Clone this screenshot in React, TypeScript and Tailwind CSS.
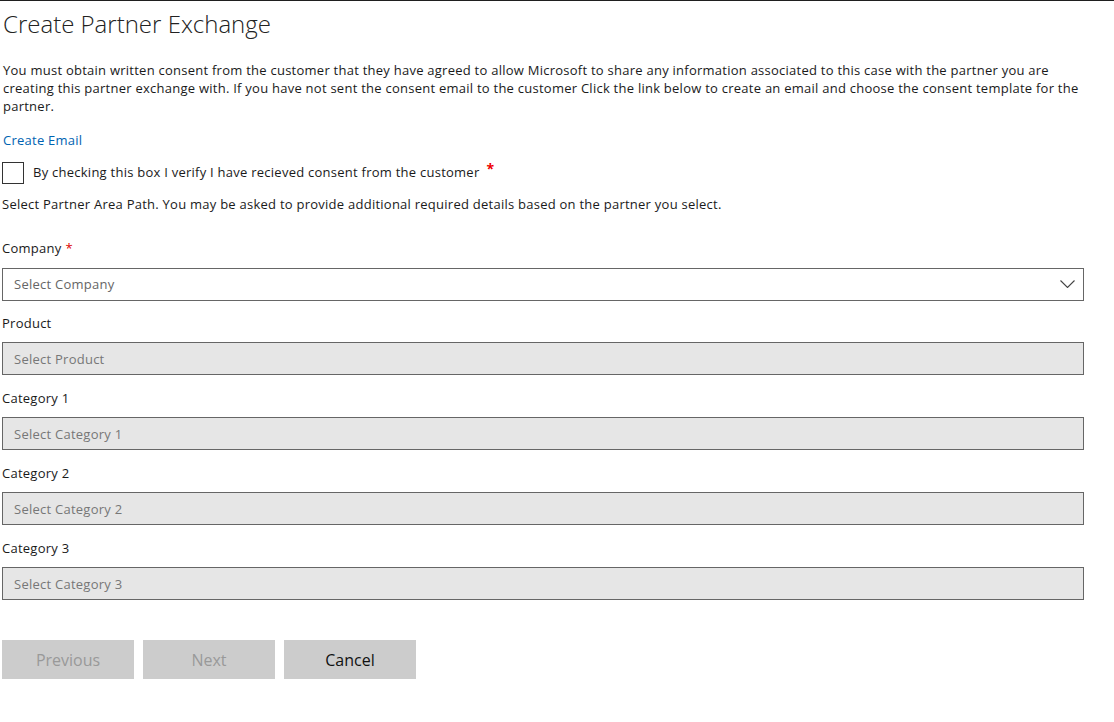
const fields = [
  { label: "Product", placeholder: "Select Product", first: true },
  { label: "Category 1", placeholder: "Select Category 1" },
  { label: "Category 2", placeholder: "Select Category 2" },
  { label: "Category 3", placeholder: "Select Category 3" },
];

export default function App() {
  return (
    <div
      className="min-h-[722px] w-[1114px] border-t border-[#1f1f1f] bg-white text-[13px] leading-[18px] tracking-[0.25px] text-[#1a1a1a]"
      style={{ fontFamily: '"Open Sans", "Noto Sans", sans-serif' }}
    >
      <div className="w-[1084px] pl-[2px]">
        <h1 className="mt-[7px] pl-[1px] text-[24px] leading-[32px] font-light tracking-normal text-[#222]">
          Create Partner Exchange
        </h1>

        <p className="mt-[21px] pl-[1px]">
          You must obtain written consent from the customer that they have agreed to allow Microsoft to share any
          information associated to this case with the partner you are
          <br />
          creating this partner exchange with. If you have not sent the consent email to the customer Click the link
          below to create an email and choose the consent template for the
          <br />
          partner.
        </p>

        <a href="#" className="mt-[16px] block pl-[1px] text-[#0063b1]">
          Create Email
        </a>

        <label className="mt-[13px] flex items-center">
          <span className="h-[22px] w-[22px] shrink-0 border border-[#333] bg-white" />
          <span className="ml-[9px] -mt-[2px]">
            By checking this box I verify I have recieved consent from the customer
          </span>
          <span className="ml-[7px] -mt-[8px] text-[14px] font-bold text-[#e00]">*</span>
        </label>

        <p className="mt-[11px]">
          Select Partner Area Path. You may be asked to provide additional required details based on the partner you
          select.
        </p>

        <div className="mt-[26px]">
          <div className="flex h-[18px] items-center">
            Company <span className="ml-[4px] text-[#d00]">*</span>
          </div>
          <div className="mt-[11px] flex h-[33px] items-center justify-between border border-[#666] bg-white pl-[11px] pr-[8px] text-[#666]">
            <span className="-mt-[1px]">Select Company</span>
            <svg width="15" height="8" viewBox="0 0 15 8" fill="none" stroke="#444" strokeWidth="1.1" className="-mt-[1px]">
              <path d="M0.5 0.5 L7.5 7.5 L14.5 0.5" />
            </svg>
          </div>
        </div>

        {fields.map((f) => (
          <div key={f.label} className={f.first ? "mt-[13px]" : "mt-[14px]"}>
            <div className="h-[18px]">{f.label}</div>
            <div className="mt-[10px] flex h-[33px] items-center border border-[#666] bg-[#e6e6e6] pl-[11px] text-[#777]">
              {f.placeholder}
            </div>
          </div>
        ))}

        <div className="mt-[40px] flex gap-[9px] text-[16px] tracking-normal">
          <button className="h-[39px] w-[132px] bg-[#cccccc] text-[#999]">Previous</button>
          <button className="h-[39px] w-[132px] bg-[#cccccc] text-[#999]">Next</button>
          <button className="h-[39px] w-[132px] bg-[#cccccc] text-[#111]">Cancel</button>
        </div>
      </div>
    </div>
  );
}
